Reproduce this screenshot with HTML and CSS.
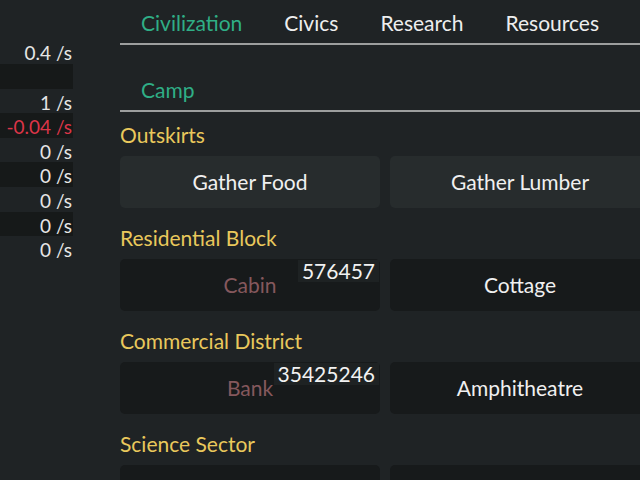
FILE: index.html
```html
<!DOCTYPE html>
<html lang="en">
<head>
<meta charset="utf-8">
<title>Civilization</title>
<link rel="stylesheet" href="styles.css">
</head>
<body>
<div class="app">
  <aside class="rates">
    <div class="rate">0.4 /s</div>
    <div class="rate"></div>
    <div class="rate">1 /s</div>
    <div class="rate negative">-0.04 /s</div>
    <div class="rate">0 /s</div>
    <div class="rate">0 /s</div>
    <div class="rate">0 /s</div>
    <div class="rate">0 /s</div>
    <div class="rate">0 /s</div>
  </aside>
  <main class="main">
    <nav class="tabs">
      <span class="tab active">Civilization</span>
      <span class="tab">Civics</span>
      <span class="tab">Research</span>
      <span class="tab">Resources</span>
    </nav>
    <nav class="tabs subtabs">
      <span class="tab active">Camp</span>
    </nav>
    <section class="district">
      <h2 class="district-title">Outskirts</h2>
      <div class="actions">
        <button class="action ready">Gather Food</button>
        <button class="action ready">Gather Lumber</button>
      </div>
    </section>
    <section class="district">
      <h2 class="district-title">Residential Block</h2>
      <div class="actions">
        <button class="action locked"><span class="label">Cabin</span><span class="count">576457</span></button>
        <button class="action">Cottage</button>
      </div>
    </section>
    <section class="district">
      <h2 class="district-title">Commercial District</h2>
      <div class="actions">
        <button class="action locked"><span class="label">Bank</span><span class="count">35425246</span></button>
        <button class="action">Amphitheatre</button>
      </div>
    </section>
    <section class="district">
      <h2 class="district-title">Science Sector</h2>
      <div class="actions">
        <button class="action"></button>
        <button class="action"></button>
      </div>
    </section>
  </main>
</div>
</body>
</html>
```

FILE: styles.css
```css
html, body {
  margin: 0;
  padding: 0;
  background: #1f2325;
  overflow: hidden;
  width: 640px;
  height: 480px;
}

body {
  font-family: Lato, "Open Sans", sans-serif;
  color: #ececec;
}

.app {
  display: flex;
  gap: 47px;
}

/* per-second income column */
.rates {
  flex: 0 0 73px;
  padding-top: 39.4px;
}

.rate {
  height: 24.6px;
  line-height: 28px;
  font-size: 19px;
  text-align: right;
  padding-right: 1px;
  color: #e6e6e6;
}

.rate:nth-child(even) {
  background: #161919;
}

.rate.negative {
  color: #dc3548;
}

.main {
  flex: 0 0 540px;
  display: flex;
  flex-direction: column;
}

/* tab strips */
.tabs {
  display: flex;
  padding-top: 11px;
  padding-bottom: 8px;
  border-bottom: 2px solid #9c9e9e;
}

.subtabs {
  margin-top: 22px;
}

.tab {
  padding: 0 21px;
  font-size: 21px;
  line-height: 24px;
  color: #eeeeee;
}

.tab.active {
  color: #2fae86;
}

/* building districts */
.district {
  margin-top: 18px;
}

.district:first-of-type {
  margin-top: 11px;
}

.district-title {
  margin: 0 0 9px;
  font-size: 21px;
  line-height: 24px;
  font-weight: normal;
  color: #e9c85c;
}

.actions {
  display: grid;
  grid-template-columns: 260px 260px;
  gap: 10px;
}

.action {
  position: relative;
  height: 52px;
  border: none;
  border-radius: 5px;
  background: #171a1b;
  color: #f0f0f0;
  font-family: inherit;
  font-size: 21px;
  padding: 0 0 2px;
}

.action.ready {
  background: #272c2d;
}

.action.locked .label {
  color: #85585d;
}

.count {
  position: absolute;
  top: 1px;
  right: 1px;
  padding: 0 4px;
  line-height: 22px;
  background: #1e2223;
  color: #f2f2f2;
  font-size: 21px;
}
```
